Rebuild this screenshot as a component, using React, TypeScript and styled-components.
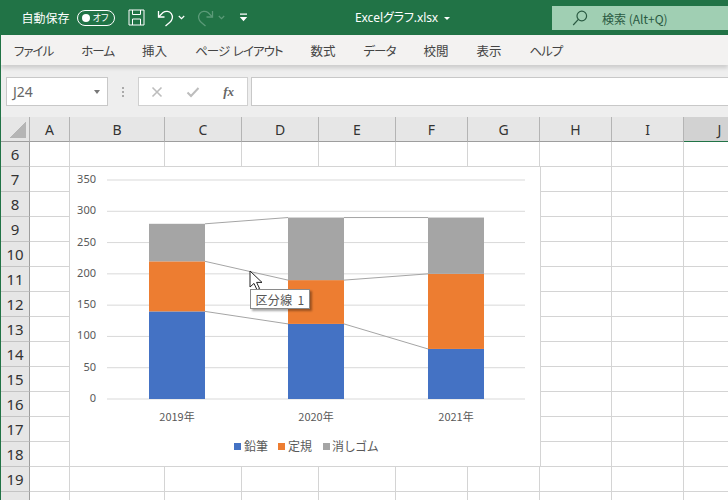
// App.tsx
import styled, { createGlobalStyle } from "styled-components";

const GlobalStyle = createGlobalStyle`
  html, body {
    margin: 0;
    padding: 0;
    overflow: hidden;
    background: #fff;
  }
  * { box-sizing: border-box; }
`;

const UI_FONT = `"Noto Sans", "Noto Sans CJK JP", sans-serif`;
const JP_FONT = `"Noto Sans CJK JP", "Noto Sans", sans-serif`;

const Window = styled.div`
  position: relative;
  width: 728px;
  height: 500px;
  overflow: hidden;
  border-left: 1px solid #217346;
  font-family: ${JP_FONT};
  font-feature-settings: "palt";
`;

const TitleBar = styled.div`
  display: flex;
  align-items: center;
  height: 35px;
  margin-left: -2px;
  padding-left: 22.5px;
  background: #217346;
  color: #fff;
`;

const AutoSave = styled.span`
  font-size: 12px;
  width: 55px;
`;

const Toggle = styled.span`
  display: flex;
  align-items: center;
  justify-content: space-between;
  width: 38px;
  height: 16px;
  padding: 0 5px 0 4px;
  border: 1.3px solid #fff;
  border-radius: 8px;
  font-size: 9px;
  margin-right: 13px;
  &::before {
    content: "";
    width: 8px;
    height: 8px;
    border-radius: 50%;
    background: #fff;
  }
`;

const QuickIcon = styled.svg<{ $gap: number }>`
  display: block;
  flex: none;
  margin-right: ${(p) => p.$gap}px;
`;

const FileName = styled.span`
  position: absolute;
  left: 354px;
  top: 9px;
  font-size: 12px;
  line-height: 18px;
  font-family: ${UI_FONT};
  letter-spacing: -0.1px;
  &::after {
    content: "";
    display: inline-block;
    margin-left: 6px;
    vertical-align: 2px;
    border: 3px solid transparent;
    border-top: 3.5px solid #fff;
    border-bottom: 0;
  }
`;

const SearchBox = styled.div`
  position: absolute;
  left: 551px;
  top: 6px;
  width: 177px;
  height: 24px;
  display: flex;
  align-items: center;
  gap: 14px;
  padding-left: 20px;
  background: #a0cfb3;
  color: #2a5a42;
  font-size: 12px;
`;

const Ribbon = styled.nav`
  display: flex;
  align-items: center;
  gap: 28px;
  height: 30px;
  padding-left: 13px;
  background: #f3f2f1;
  box-shadow: 0 3px 4px rgba(0, 0, 0, 0.14);
  position: relative;
  color: #444;
  font-size: 12.5px;
`;

const RibbonTab = styled.span<{ $kana?: boolean }>`
  white-space: pre;
  letter-spacing: ${(p) => (p.$kana ? "-1px" : "0")};
  word-spacing: 2px;
`;

const FormulaBar = styled.div`
  display: flex;
  align-items: stretch;
  height: 52px;
  padding: 12px 0 11px 5px;
  background: #eeeeee;
`;

const NameBox = styled.div`
  display: flex;
  align-items: center;
  justify-content: space-between;
  width: 102px;
  padding: 0 7px 0 6px;
  background: #fff;
  border: 1px solid #c8c8c8;
  color: #666;
  font-family: ${UI_FONT};
  font-size: 14px;
  &::after {
    content: "";
    border: 3.5px solid transparent;
    border-top: 4px solid #777;
    border-bottom: 0;
  }
`;

const Grip = styled.div`
  width: 30px;
  display: flex;
  align-items: center;
  justify-content: center;
  &::before {
    content: "";
    width: 2px;
    height: 10px;
    background: repeating-linear-gradient(#aaa 0 2px, transparent 2px 4px);
  }
`;

const FormulaButtons = styled.div`
  display: flex;
  align-items: center;
  justify-content: space-between;
  width: 110px;
  padding: 0 13px 0 12px;
  background: #fff;
  border: 1px solid #d0d0d0;
`;

const FxLabel = styled.span`
  font-family: "Liberation Serif", serif;
  font-style: italic;
  font-weight: bold;
  font-size: 13px;
  color: #666;
`;

const FormulaInput = styled.div`
  flex: 1;
  margin-left: 3px;
  background: #fff;
  border: 1px solid #c8c8c8;
  border-right: 0;
`;

const Sheet = styled.div`
  position: relative;
  display: grid;
  grid-template-columns: 29px 40px 95px 77px 77px 77px 72px 72px 72px 72px 72px;
  grid-auto-rows: 25px;
  color: #333;
  font-family: ${UI_FONT};
`;

const Corner = styled.div`
  background: #e6e6e6;
  border-right: 1px solid #b0b0b0;
  border-bottom: 1px solid #9e9e9e;
  &::before {
    content: "";
    display: block;
    margin: 4px 0 0 8px;
    width: 17px;
    height: 17px;
    background: linear-gradient(135deg, transparent 50%, #b5b5b5 50%);
  }
`;

const ColumnHead = styled.div<{ $selected?: boolean }>`
  display: flex;
  align-items: center;
  justify-content: center;
  font-size: 14px;
  background: ${(p) => (p.$selected ? "#d2d2d2" : "#e6e6e6")};
  border-right: 1px solid #b4b4b4;
  border-bottom: ${(p) => (p.$selected ? "1.5px solid #217346" : "1px solid #9e9e9e")};
`;

const RowHead = styled.div`
  display: flex;
  align-items: center;
  justify-content: center;
  font-size: 15px;
  background: #e6e6e6;
  border-right: 1px solid #9e9e9e;
  border-bottom: 1px solid #c4c4c4;
`;

const Cell = styled.div`
  border-right: 1px solid #d4d4d4;
  border-bottom: 1px solid #d4d4d4;
  background: #fff;
`;

const ChartFrame = styled.div`
  position: absolute;
  left: 68px;
  top: 49px;
  width: 472px;
  height: 301px;
  background: #fff;
  border: 1px solid #d4d4d4;
`;

const ChartSvg = styled.svg`
  display: block;
  font-family: ${JP_FONT};
  font-size: 11px;
  fill: #595959;
`;

const Tip = styled.div`
  position: absolute;
  left: 249px;
  top: 289px;
  width: 60px;
  height: 20px;
  display: flex;
  align-items: center;
  justify-content: center;
  background: #fff;
  border: 1px solid #8a8a8a;
  box-shadow: 2px 2px 2px rgba(0, 0, 0, 0.35);
  color: #555;
  font-size: 12px;
  letter-spacing: 0.3px;
  word-spacing: 2px;
`;

const Cursor = styled.svg`
  position: absolute;
  left: 248px;
  top: 270px;
`;

const tabs = [
  { label: "ファイル", kana: true },
  { label: "ホーム", kana: true },
  { label: "挿入" },
  { label: "ページ レイアウト", kana: true },
  { label: "数式" },
  { label: "データ", kana: true },
  { label: "校閲" },
  { label: "表示" },
  { label: "ヘルプ", kana: true },
];
const columns = ["A", "B", "C", "D", "E", "F", "G", "H", "I", "J"];
const rows = [6, 7, 8, 9, 10, 11, 12, 13, 14, 15, 16, 17, 18, 19, 20];

const series = [
  { name: "鉛筆", color: "#4472c4", values: [140, 120, 80] },
  { name: "定規", color: "#ed7d31", values: [80, 70, 120] },
  { name: "消しゴム", color: "#a5a5a5", values: [60, 100, 90] },
];
const years = ["2019年", "2020年", "2021年"];
const barLefts = [149, 288, 428];
const BAR_W = 56;
const ZERO_Y = 399;
const yOf = (v: number) => ZERO_Y - (v * 219) / 350;

// chart svg coordinates are page coordinates minus this origin
const OX = 70;
const OY = 167;

function StackedChart() {
  const stacks = years.map((_, i) => {
    let sum = 0;
    return series.map((s) => {
      const from = sum;
      sum += s.values[i];
      return { from, to: sum, color: s.color };
    });
  });

  return (
    <ChartSvg width={470} height={299} viewBox={`${OX} ${OY} 470 299`}>
      {[0, 50, 100, 150, 200, 250, 300, 350].map((v) => (
        <g key={v}>
          <line x1={107} x2={525} y1={yOf(v)} y2={yOf(v)} stroke="#d9d9d9" />
          <text x={96} y={yOf(v) + 3} textAnchor="end" fontFamily="Noto Sans">{v}</text>
        </g>
      ))}
      {stacks.map((stack, i) =>
        stack.map((b) => (
          <rect
            key={`${i}-${b.color}`}
            x={barLefts[i]}
            width={BAR_W}
            y={yOf(b.to)}
            height={yOf(b.from) - yOf(b.to)}
            fill={b.color}
          />
        ))
      )}
      {[0, 1].map((i) =>
        stacks[i].map((b, k) => (
          <line
            key={`${i}-${k}`}
            x1={barLefts[i] + BAR_W}
            x2={barLefts[i + 1]}
            y1={yOf(b.to)}
            y2={yOf(stacks[i + 1][k].to)}
            stroke="#a5a5a5"
          />
        ))
      )}
      {years.map((y, i) => (
        <text key={y} x={barLefts[i] + BAR_W / 2} y={421} textAnchor="middle">{y}</text>
      ))}
      <rect x={234} y={443} width={7} height={7} fill="#4472c4" />
      <text x={244} y={450.5} fontSize={12}>鉛筆</text>
      <rect x={278} y={443} width={7} height={7} fill="#ed7d31" />
      <text x={288} y={450.5} fontSize={12}>定規</text>
      <rect x={323} y={443} width={7} height={7} fill="#a5a5a5" />
      <text x={332} y={450.5} fontSize={12} letterSpacing={0.6}>消しゴム</text>
    </ChartSvg>
  );
}

export default function App() {
  return (
    <Window>
      <GlobalStyle />
      <TitleBar>
        <AutoSave>自動保存</AutoSave>
        <Toggle>オフ</Toggle>
        <QuickIcon $gap={12} width="17" height="17" viewBox="0 0 17 17" fill="none" stroke="#fff" strokeWidth="1">
          <path d="M1 1h15v15H1z" />
          <path d="M4.5 1v4.5h8V1M4.5 16v-6h8v6" />
        </QuickIcon>
        <QuickIcon $gap={4} width="17" height="18" viewBox="0 0 17 18" fill="none" stroke="#fff" strokeWidth="1.3">
          <path d="M1.5 2v6h6" />
          <path d="M1.5 8L6 3.6c2.6-2 6.4-1.6 8.3 1 2 2.8 1.2 6.6-1.4 8.6L8.5 17" />
        </QuickIcon>
        <QuickIcon $gap={12} width="7" height="5" viewBox="0 0 7 5" fill="none" stroke="#fff" strokeWidth="1.2">
          <path d="M.8 1l2.7 2.7L6.2 1" />
        </QuickIcon>
        <QuickIcon $gap={4} width="17" height="18" viewBox="0 0 17 18" fill="none" stroke="#5b9a78" strokeWidth="1.3">
          <path d="M15.5 2v6h-6" />
          <path d="M15.5 8L11 3.6c-2.6-2-6.4-1.6-8.3 1-2 2.8-1.2 6.6 1.4 8.6L8.5 17" />
        </QuickIcon>
        <QuickIcon $gap={14} width="7" height="5" viewBox="0 0 7 5" fill="none" stroke="#5b9a78" strokeWidth="1.2">
          <path d="M.8 1l2.7 2.7L6.2 1" />
        </QuickIcon>
        <QuickIcon $gap={0} width="9" height="9" viewBox="0 0 9 9" fill="#fff">
          <path d="M1 0.5h7v1.2H1zM.8 4h7.4L4.5 8.2z" />
        </QuickIcon>
        <FileName>Excelグラフ.xlsx</FileName>
        <SearchBox>
          <svg width="16" height="16" viewBox="0 0 16 16" fill="none" stroke="#2a5a42" strokeWidth="1.2">
            <circle cx="9.8" cy="6" r="4.8" />
            <path d="M6.4 9.4L1.2 15" />
          </svg>
          <span>検索 (Alt+Q)</span>
        </SearchBox>
      </TitleBar>

      <Ribbon>
        {tabs.map((t) => (
          <RibbonTab key={t.label} $kana={t.kana}>{t.label}</RibbonTab>
        ))}
      </Ribbon>

      <FormulaBar>
        <NameBox>J24</NameBox>
        <Grip />
        <FormulaButtons>
          <svg width="12" height="12" viewBox="0 0 12 12" stroke="#bdbdbd" strokeWidth="1.6">
            <path d="M1.5 1.5l9 9M10.5 1.5l-9 9" />
          </svg>
          <svg width="14" height="12" viewBox="0 0 14 12" fill="none" stroke="#bdbdbd" strokeWidth="2">
            <path d="M1.5 6.5l3.5 3.5 7.5-8" />
          </svg>
          <FxLabel>fx</FxLabel>
        </FormulaButtons>
        <FormulaInput />
      </FormulaBar>

      <Sheet>
        <Corner />
        {columns.map((c) => (
          <ColumnHead key={c} $selected={c === "J"}>{c}</ColumnHead>
        ))}
        {rows.map((r) => (
          <Row key={r} n={r} />
        ))}
        <ChartFrame>
          <StackedChart />
        </ChartFrame>
      </Sheet>

      <Cursor width="14" height="21" viewBox="0 0 14 21">
        <path d="M1 1v16l4-3.6 3 6.4 2.6-1.2-3-6.2h5.4z" fill="#fff" stroke="#222" strokeWidth="1" />
      </Cursor>
      <Tip>区分線 1</Tip>
    </Window>
  );
}

function Row({ n }: { n: number }) {
  return (
    <>
      <RowHead>{n}</RowHead>
      {columns.map((c) => (
        <Cell key={c} />
      ))}
    </>
  );
}
